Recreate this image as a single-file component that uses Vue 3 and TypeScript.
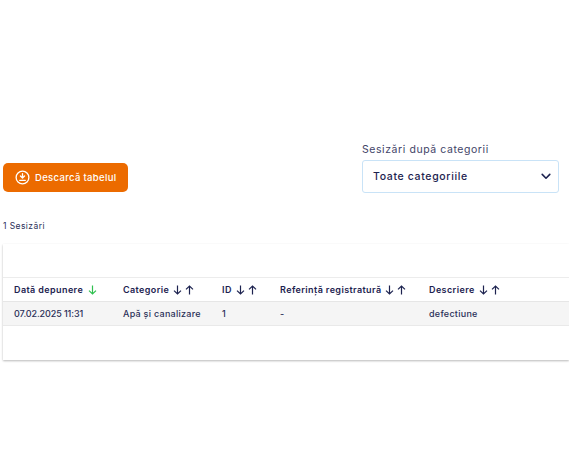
<script setup lang="ts">
interface Column {
  label: string;
  width: number;
  active?: boolean;
}

const columns: Column[] = [
  { label: 'Dată depunere', width: 109, active: true },
  { label: 'Categorie', width: 99 },
  { label: 'ID', width: 58 },
  { label: 'Referință registratură', width: 149 },
  { label: 'Descriere', width: 140 },
];

const row = ['07.02.2025 11:31', 'Apă și canalizare', '1', '-', 'defectiune'];
</script>

<template>
  <div class="page">
    <div class="toolbar">
      <button class="download">
        <svg width="15" height="15" viewBox="0 0 16 16" fill="none" stroke="#fff" stroke-width="1.4">
          <circle cx="8" cy="8" r="6.8" />
          <path d="M8 3.8v4.6M5.8 6.4 8 8.6l2.2-2.2" stroke-linecap="round" stroke-linejoin="round" />
          <path d="M5 11h6" stroke-linecap="round" />
        </svg>
        Descarcă tabelul
      </button>
      <div class="filter">
        <label>Sesizări după categorii</label>
        <div class="select">
          <span>Toate categoriile</span>
          <svg width="10" height="7" viewBox="0 0 10 7" fill="none" stroke="#1d2350" stroke-width="1.6">
            <path d="M1.2 1.4 5 5.2l3.8-3.8" stroke-linecap="round" stroke-linejoin="round" />
          </svg>
        </div>
      </div>
    </div>

    <div class="count">1 Sesizări</div>

    <div class="card">
      <div class="card-top"></div>
      <div class="head">
        <div v-for="col in columns" :key="col.label" class="cell" :style="{ width: col.width + 'px' }">
          {{ col.label }}
          <span class="arrows" :class="{ active: col.active }">
            <svg width="9" height="10" viewBox="0 0 9 10" fill="none" :stroke="col.active ? '#2fc04f' : '#1d2350'" stroke-width="1.2">
              <path d="M4.5 .6v8.4M1 5.6 4.5 9 8 5.6" />
            </svg>
            <svg v-if="!col.active" width="9" height="10" viewBox="0 0 9 10" fill="none" stroke="#1d2350" stroke-width="1.2">
              <path d="M4.5 9.4V1M1 4.4 4.5 1 8 4.4" />
            </svg>
          </span>
        </div>
      </div>
      <div class="body-row">
        <div
          v-for="(value, i) in row"
          :key="i"
          class="cell"
          :class="{ date: i === 0 }"
          :style="{ width: columns[i].width + 'px' }"
        >
          {{ value }}
        </div>
      </div>
      <div class="card-bottom"></div>
    </div>
  </div>
</template>

<style scoped>
.page {
  box-sizing: border-box;
  width: 569px;
  height: 474px;
  padding: 142px 0 0 3px;
  overflow: hidden;
  font-family: Inter, "Open Sans", sans-serif;
  color: #1d2350;
  background: #fff;
}

.toolbar {
  display: flex;
  justify-content: space-between;
  align-items: flex-end;
  padding-right: 10px;
}

.download {
  display: flex;
  align-items: center;
  gap: 5px;
  box-sizing: border-box;
  width: 125px;
  height: 29px;
  margin-bottom: 1px;
  padding: 0 0 0 12px;
  border: none;
  border-radius: 5px;
  background: #ec6b00;
  color: #fff;
  font-family: inherit;
  font-size: 9.5px;
  font-weight: 500;
  letter-spacing: 0.33px;
}

.filter {
  display: flex;
  flex-direction: column;
  gap: 3px;
  width: 197px;
}

.filter label {
  font-size: 10.5px;
  line-height: 15px;
  letter-spacing: 0.57px;
  color: #3f4468;
}

.select {
  display: flex;
  justify-content: space-between;
  align-items: center;
  box-sizing: border-box;
  height: 33px;
  padding: 0 7px 0 10px;
  border: 1px solid #c9e3f7;
  border-radius: 3px;
  font-size: 10.5px;
  font-weight: 500;
  letter-spacing: 0.65px;
}

.count {
  margin-top: 27px;
  font-size: 8.5px;
  line-height: 12px;
  letter-spacing: 0.42px;
  color: #2b3058;
}

.card {
  margin-top: 12px;
  box-shadow: 0 1px 2px rgba(0, 0, 0, 0.28);
  background: #fff;
}

.card-top {
  box-sizing: border-box;
  height: 34px;
  border-bottom: 1px solid #ececec;
}

.head,
.body-row {
  display: flex;
  align-items: center;
  box-sizing: border-box;
  height: 24px;
  padding-left: 11px;
  font-size: 9px;
}

.head {
  font-weight: 600;
  letter-spacing: 0.4px;
  border-bottom: 1px solid #e6e6e6;
}

.body-row {
  background: #f5f5f5;
  border-bottom: 1px solid #e9e9e9;
  font-weight: 500;
  letter-spacing: 0.27px;
  color: #2b3058;
}

.cell {
  display: flex;
  align-items: center;
  flex: none;
  white-space: nowrap;
}

.cell.date {
  letter-spacing: -0.1px;
}

.arrows {
  display: inline-flex;
  gap: 3px;
  margin-left: 4px;
}

.arrows.active {
  margin-left: 5px;
}

.card-bottom {
  height: 34px;
}
</style>

<style>
body {
  background: #fff;
}
</style>
